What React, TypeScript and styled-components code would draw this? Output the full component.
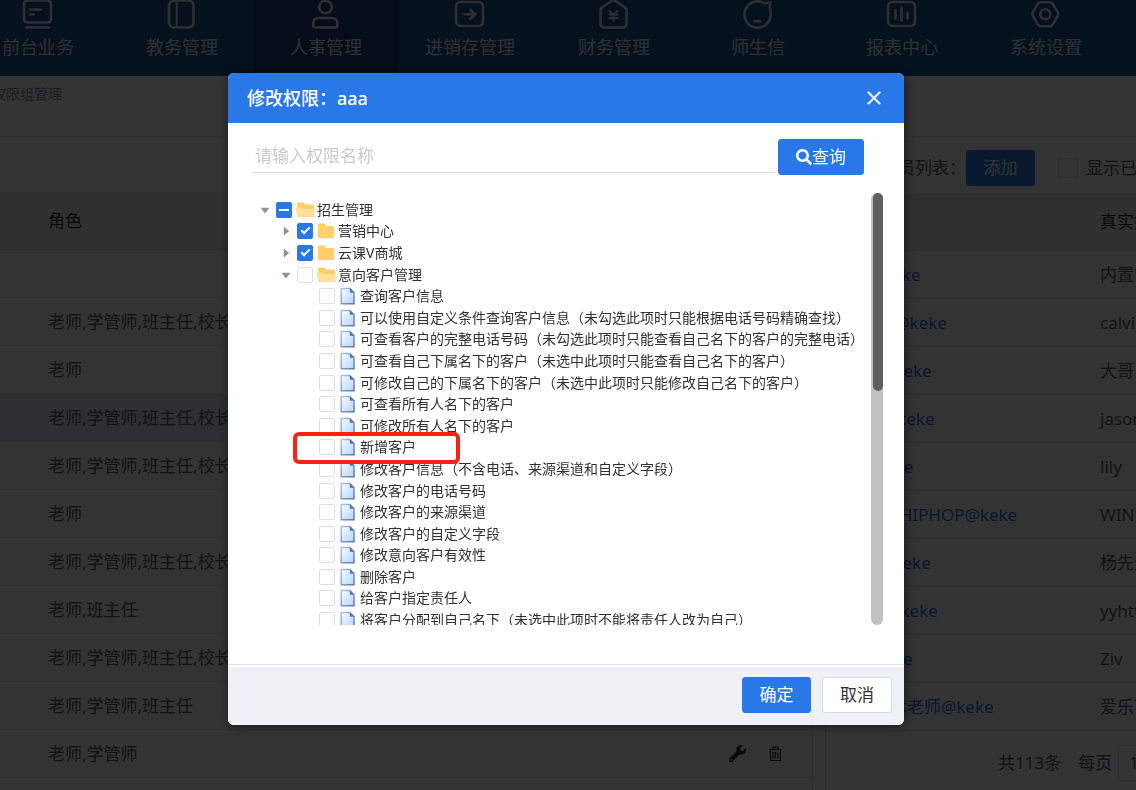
import React, { useEffect, useRef } from "react";
import styled, { createGlobalStyle, css } from "styled-components";
import { FaSearch, FaWrench } from "react-icons/fa";

const PRIMARY = "#2878e8";
const FONT = '"Noto Sans", "Noto Sans CJK SC", sans-serif';

const GlobalStyle = createGlobalStyle`
  *, *::before, *::after { box-sizing: border-box; }
  html, body { height: 100%; }
  body {
    margin: 0;
    overflow: hidden;
    background: #fff;
    color: #606266;
    font-family: ${FONT};
    font-size: 17px;
    line-height: 24px;
  }
  button, input { font: inherit; }
  a { color: inherit; text-decoration: none; }
`;

/* ---------- page behind the dialog ---------- */

const TopNav = styled.nav`
  height: 76px;
  overflow: hidden;
  background: #1e559f;
`;

const NavList = styled.ul`
  display: flex;
  margin: 0 0 0 -34px;
  padding: 0;
  list-style: none;
`;

const NavLink = styled.a<{ $active?: boolean }>`
  display: flex;
  flex-direction: column;
  align-items: center;
  gap: 5px;
  width: 144px;
  height: 76px;
  color: #e8e8e8;
  font-size: 18px;
  background: ${(p) => (p.$active ? "#1b4378" : "transparent")};
`;

const NavIcon = styled.svg`
  width: 34px;
  height: 30px;
  fill: none;
  stroke: currentColor;
  stroke-width: 2.6;
  stroke-linecap: round;
  stroke-linejoin: round;
`;

const Breadcrumb = styled.div`
  height: 61px;
  padding: 6px 0 0;
  margin-left: -8px;
  border-bottom: 1px solid #e4e6ea;
  color: #909399;
  font-size: 14px;
`;

const Columns = styled.main`
  display: grid;
  grid-template-columns: minmax(0, 1fr) 311px;
  gap: 12px;
`;

const Panel = styled.section<{ $side: "left" | "right" }>`
  min-width: 0;
  overflow: hidden;
  border: 0 solid #dcdfe6;
  ${(p) => (p.$side === "left" ? "border-right-width: 1px;" : "border-left-width: 1px;")}
`;

const Toolbar = styled.div<{ $height: number }>`
  display: flex;
  align-items: center;
  height: ${(p) => p.$height}px;
  padding: 6px 0 0 21px;
  white-space: nowrap;
`;

const Table = styled.table`
  width: 100%;
  border-collapse: separate;
  border-spacing: 0;
  table-layout: fixed;
  white-space: nowrap;
`;

const HeadCell = styled.th<{ $width?: string; $pad?: number }>`
  width: ${(p) => p.$width ?? "auto"};
  height: 58px;
  padding: 0 0 0 ${(p) => p.$pad ?? 0}px;
  border-bottom: 1px solid #e4e6ea;
  background: #f1f1f1;
  color: #303133;
  font-weight: 400;
  text-align: left;
`;

const Row = styled.tr<{ $current?: boolean }>`
  background: ${(p) => (p.$current ? "#d9eefa" : "transparent")};
`;

const Cell = styled.td<{ $pad?: number }>`
  height: 48px;
  padding: 0 0 0 ${(p) => p.$pad ?? 0}px;
  border-bottom: 1px solid #e4e6ea;
`;

const RowActions = styled.div`
  display: flex;
  align-items: center;
  gap: 22px;
`;

const IconButton = styled.button`
  display: flex;
  padding: 0;
  border: 0;
  background: none;
  color: #303133;
`;

const AccountLink = styled.a`
  color: ${PRIMARY};
`;

const ShowLabel = styled.label`
  display: flex;
  align-items: center;
  gap: 8px;
  margin-left: 23px;
`;

const Pager = styled.div`
  display: flex;
  align-items: center;
  gap: 6px;
  height: 64px;
  padding-left: 172px;
  white-space: nowrap;
`;

const PageSize = styled.select`
  width: 90px;
  height: 36px;
  padding: 0 10px;
  border: 1px solid #dcdfe6;
  border-radius: 4px;
  appearance: none;
  background: #fff;
  color: #606266;
  font: inherit;
`;

const Total = styled.span`
  margin-right: 11px;
`;

/* ---------- shared controls ---------- */

const Button = styled.button<{ $primary?: boolean; $width?: number }>`
  display: flex;
  flex: none;
  align-items: center;
  justify-content: center;
  width: ${(p) => p.$width ?? 69}px;
  height: 36px;
  padding: 0;
  border: 1px solid ${(p) => (p.$primary ? PRIMARY : "#d8dce6")};
  border-radius: 3px;
  background: ${(p) => (p.$primary ? PRIMARY : "#fff")};
  color: ${(p) => (p.$primary ? "#fff" : "#303133")};
`;

const checkedMark = css`
  &::before {
    content: "";
    width: 9px;
    height: 5px;
    margin-bottom: 3px;
    border: solid #fff;
    border-width: 0 0 2px 2px;
    transform: rotate(-45deg);
  }
`;

const partialMark = css`
  &::before {
    content: "";
    width: 10px;
    height: 2px;
    background: #fff;
  }
`;

const Checkbox = styled.input<{ $size?: number }>`
  appearance: none;
  display: flex;
  flex: none;
  align-items: center;
  justify-content: center;
  width: ${(p) => p.$size ?? 16}px;
  height: ${(p) => p.$size ?? 16}px;
  margin: 0;
  border: 1px solid #dcdfe8;
  border-radius: 2px;
  background: #fff;
  &:checked,
  &:indeterminate {
    border-color: ${PRIMARY};
    background: ${PRIMARY};
  }
  &:checked { ${checkedMark} }
  &:indeterminate { ${partialMark} }
`;

/* ---------- dialog ---------- */

const Overlay = styled.div`
  position: fixed;
  inset: 0;
  display: flex;
  align-items: flex-start;
  justify-content: center;
  padding: 73px 4px 0 0;
  background: rgba(0, 0, 0, 0.8);
`;

const Dialog = styled.div`
  display: flex;
  flex-direction: column;
  width: 100%;
  max-width: 676px;
  border-radius: 6px;
  overflow: hidden;
  background: #fff;
  color: #303133;
  box-shadow: 1px 1px 12px rgba(0, 0, 0, 0.5);
`;

const DialogHeader = styled.header`
  display: flex;
  align-items: center;
  justify-content: space-between;
  height: 50px;
  padding: 0 22px 0 19px;
  background: ${PRIMARY};
  color: #fff;
`;

const DialogTitle = styled.h2`
  margin: 0;
  font-size: 18px;
  font-weight: 500;
`;

const CloseButton = styled.button`
  display: flex;
  padding: 0;
  border: 0;
  background: none;
  color: #dfeafc;
`;

const DialogBody = styled.div`
  padding: 16px 21px 39px 24px;
`;

const SearchRow = styled.form`
  display: flex;
  align-items: flex-start;
  gap: 4px;
  padding-right: 19px;
`;

const SearchInput = styled.input`
  flex: 1;
  min-width: 0;
  height: 34px;
  padding: 0 3px;
  border: 0;
  border-bottom: 1px solid #dcdfe8;
  outline: 0;
  &::placeholder { color: #c8cad0; }
`;

const TreeScroll = styled.div`
  display: flex;
  height: 432px;
  margin-top: 18px;
`;

const TreeViewport = styled.div`
  flex: 1;
  min-width: 0;
  padding-top: 6px;
  overflow: hidden;
`;

const Tree = styled.ul`
  display: grid;
  grid-auto-rows: 5%;
  height: 432px;
  margin: 0;
  padding: 0 0 0 5px;
  list-style: none;
  font-size: 14px;
`;

const INDENT = [0, 21, 43];

const TreeRow = styled.li<{ $level: number }>`
  position: relative;
  display: flex;
  align-items: center;
  padding-left: ${(p) => INDENT[p.$level]}px;
  white-space: nowrap;
`;

const Toggle = styled.button`
  display: flex;
  align-items: center;
  justify-content: center;
  width: 16px;
  height: 16px;
  margin-right: 3px;
  padding: 0;
  border: 0;
  background: none;
`;

const ToggleSpace = styled.span`
  width: 19px;
`;

const NodeLabel = styled.label`
  display: flex;
  align-items: center;
`;

const NodeIcon = styled.span`
  display: flex;
  justify-content: center;
  width: 20px;
  margin: 0 2px 0 3px;
`;

const Highlight = styled.span`
  position: absolute;
  z-index: 1;
  top: -5px;
  left: 36px;
  width: 167px;
  height: 32px;
  border: 4px solid #fd2113;
  border-radius: 6px;
  pointer-events: none;
`;

const ScrollTrack = styled.div`
  width: 12px;
  padding-left: 2px;
  border-radius: 6px;
  background: #c1c1c1;
`;

const ScrollThumb = styled.div`
  height: 198px;
  border-radius: 5px;
  background: #606060;
`;

const DialogFooter = styled.footer`
  display: flex;
  justify-content: flex-end;
  gap: 11px;
  padding: 10px 12px 12px;
  border-top: 2px solid #fff;
  background: #eff1f6;
`;

const FooterRule = styled.div`
  height: 1px;
  background: #e0e3ee;
`;

/* ---------- drawings ---------- */

const navItems: { label: string; active?: boolean; icon: React.ReactNode }[] = [
  {
    label: "前台业务",
    icon: (
      <>
        <rect x="3" y="0.5" width="27" height="22" rx="3.5" />
        <path d="M9 9.500h11M9 14.500h3.500M5.500 27.500h22.500" />
      </>
    ),
  },
  {
    label: "教务管理",
    icon: (
      <>
        <rect x="4" y="0.5" width="24.500" height="27" rx="5" />
        <path d="M11.700 1v26" strokeWidth="2" />
      </>
    ),
  },
  {
    label: "人事管理",
    active: true,
    icon: (
      <>
        <circle cx="16.500" cy="7" r="6.300" />
        <path d="M4.300 25.500v-2.500a5 5 0 0 1 5-5h14a5 5 0 0 1 5 5v2.500a2 2 0 0 1-2 2h-20a2 2 0 0 1-2-2z" />
      </>
    ),
  },
  {
    label: "进销存管理",
    icon: (
      <>
        <rect x="3" y="2" width="27" height="24" rx="4.500" />
        <path d="M11.500 14.300h10.500M17.500 10l5 4.300-5 4.300" />
      </>
    ),
  },
  {
    label: "财务管理",
    icon: (
      <>
        <path d="M14.500 1.200a3.500 3.500 0 0 1 4 0l9 5.800a4 4 0 0 1 2 3.300v13.500a3.800 3.800 0 0 1-3.800 3.800h-18.400a3.800 3.800 0 0 1-3.800-3.800v-13.500a4 4 0 0 1 2-3.300z" />
        <path d="M12.800 11l3.700 4 3.700-4M16.500 15v5.500M12.300 14.700h8.400M12.300 18h8.400" strokeWidth="2" />
      </>
    ),
  },
  {
    label: "师生信",
    icon: (
      <>
        <path d="M22.500 2.700A13.200 13.200 0 1 0 29.300 11c-.6-2.500-.8-5 .2-8.700-2.500 1-4.500 1.200-7 .4z" />
        <path d="M13.500 21.300h6" />
      </>
    ),
  },
  {
    label: "报表中心",
    icon: (
      <>
        <rect x="3" y="2" width="27" height="24" rx="4.500" />
        <path d="M10.500 10v8.500M16.500 8v12.500M22.500 12.500v6" />
      </>
    ),
  },
  {
    label: "系统设置",
    icon: (
      <>
        <path d="M11.500 2.200h9.500a3 3 0 0 1 2.600 1.500l5.200 9a3 3 0 0 1 0 3l-5.200 9a3 3 0 0 1-2.600 1.500h-9.500a3 3 0 0 1-2.600-1.500l-5.200-9a3 3 0 0 1 0-3l5.200-9a3 3 0 0 1 2.600-1.500z" />
        <circle cx="16.300" cy="14.200" r="5" />
      </>
    ),
  },
];

const TrashIcon = () => (
  <svg width="15" height="16" viewBox="0 0 15 16" fill="none" stroke="currentColor" strokeWidth="1.200">
    <path d="M1 3.500h13M5 3.200V1.200h5v2M2.600 3.500v11h9.800v-11M5.200 6v6.500M7.500 6v6.500M9.800 6v6.500" />
  </svg>
);

const CloseIcon = () => (
  <svg width="16" height="16" viewBox="0 0 16 16" stroke="currentColor" strokeWidth="2.400" strokeLinecap="round">
    <path d="M2.500 2.500l11 11M13.500 2.500l-11 11" />
  </svg>
);

const Caret = ({ open }: { open: boolean }) => (
  <svg width="10" height="10" viewBox="0 0 10 10" fill="#8f9299">
    <path d={open ? "M.5 2.800h9L5 8.500z" : "M2.800.5v9L8.200 5z"} />
  </svg>
);

const FolderIcon = ({ open }: { open: boolean }) =>
  open ? (
    <svg width="20" height="16" viewBox="0 0 20 16">
      <path d="M2 2A1.500 1.500 0 0 1 3.500.5h4.800l2 2h7.200A1.500 1.500 0 0 1 19 4v10H3z" fill="#ffce66" />
      <path d="M1.300 5.500h4.200l1.500 1.500H19.500V14a1.200 1.200 0 0 1-1.200 1.200H3.500A1.200 1.200 0 0 1 2.300 14L.3 6.500z" fill="#ffe09b" />
    </svg>
  ) : (
    <svg width="18" height="16" viewBox="0 0 18 16">
      <path d="M.8 2A1.500 1.500 0 0 1 2.300.5h5l2.200 2.500h6.200a1.500 1.500 0 0 1 1.500 1.500v9.300a1.500 1.500 0 0 1-1.500 1.500H2.300a1.500 1.500 0 0 1-1.500-1.500z" fill="#ffd06a" />
    </svg>
  );

const FileIcon = () => (
  <svg width="16" height="18" viewBox="0 0 16 18">
    <defs>
      <linearGradient id="sheet" x1="0" y1="0" x2="1" y2="1">
        <stop offset="0" stopColor="#ffffff" />
        <stop offset="0.250" stopColor="#e6f2ff" />
        <stop offset="1" stopColor="#b4d4fb" />
      </linearGradient>
      <linearGradient id="edge" x1="0" y1="0" x2="1" y2="1">
        <stop offset="0" stopColor="#a9c6ee" />
        <stop offset="1" stopColor="#6075ae" />
      </linearGradient>
    </defs>
    <path d="M1.200 1.500h8.800l4 4v11.300H1.200z" fill="url(#sheet)" stroke="url(#edge)" strokeWidth="1.500" />
    <path d="M9.800 1.300v4.500h4.500z" fill="#4e74b8" />
  </svg>
);

/* ---------- data ---------- */

const FULL = "老师,学管师,班主任,校长";
const roleRows = ["", FULL, "老师", FULL, FULL, "老师", FULL, "老师,班主任", FULL, "老师,学管师,班主任", "老师,学管师"];

const members: [string, string][] = [
  ["neil@keke", "内置管理员"],
  ["calvin1@keke", "calvin"],
  ["dage@keke", "大哥"],
  ["jason@keke", "jason"],
  ["lily@keke", "lily"],
  ["WINNI_HIPHOP@keke", "WINNI"],
  ["yang@keke", "杨先生"],
  ["yyhttt@keke", "yyhttt"],
  ["ziv@keke", "Ziv"],
  ["爱乐艺术老师@keke", "爱乐艺术"],
];

type TreeNode = {
  text: string;
  level: number;
  open?: boolean;
  state?: "checked" | "partial";
  marked?: boolean;
};

const leaf = (text: string, marked = false): TreeNode => ({ text, level: 2, marked });

const nodes: TreeNode[] = [
  { text: "招生管理", level: 0, open: true, state: "partial" },
  { text: "营销中心", level: 1, open: false, state: "checked" },
  { text: "云课V商城", level: 1, open: false, state: "checked" },
  { text: "意向客户管理", level: 1, open: true },
  leaf("查询客户信息"),
  leaf("可以使用自定义条件查询客户信息（未勾选此项时只能根据电话号码精确查找）"),
  leaf("可查看客户的完整电话号码（未勾选此项时只能查看自己名下的客户的完整电话）"),
  leaf("可查看自己下属名下的客户（未选中此项时只能查看自己名下的客户）"),
  leaf("可修改自己的下属名下的客户（未选中此项时只能修改自己名下的客户）"),
  leaf("可查看所有人名下的客户"),
  leaf("可修改所有人名下的客户"),
  leaf("新增客户", true),
  leaf("修改客户信息（不含电话、来源渠道和自定义字段）"),
  leaf("修改客户的电话号码"),
  leaf("修改客户的来源渠道"),
  leaf("修改客户的自定义字段"),
  leaf("修改意向客户有效性"),
  leaf("删除客户"),
  leaf("给客户指定责任人"),
  leaf("将客户分配到自己名下（未选中此项时不能将责任人改为自己）"),
];

/* ---------- components ---------- */

function TreeItem({ node }: { node: TreeNode }) {
  const box = useRef<HTMLInputElement>(null);
  useEffect(() => {
    if (box.current) box.current.indeterminate = node.state === "partial";
  }, [node.state]);
  const isFolder = node.open !== undefined;
  return (
    <TreeRow $level={node.level}>
      {isFolder ? (
        <Toggle type="button" aria-label={node.open ? "收起" : "展开"}>
          <Caret open={!!node.open} />
        </Toggle>
      ) : (
        <ToggleSpace />
      )}
      <NodeLabel>
        <Checkbox ref={box} type="checkbox" defaultChecked={node.state === "checked"} />
        <NodeIcon>{isFolder ? <FolderIcon open={!!node.open} /> : <FileIcon />}</NodeIcon>
        {node.text}
      </NodeLabel>
      {node.marked && <Highlight />}
    </TreeRow>
  );
}

export default function App() {
  return (
    <>
      <GlobalStyle />
      <TopNav>
        <NavList>
          {navItems.map((item) => (
            <li key={item.label}>
              <NavLink href="#" $active={item.active}>
                <NavIcon viewBox="0 0 34 30">{item.icon}</NavIcon>
                {item.label}
              </NavLink>
            </li>
          ))}
        </NavList>
      </TopNav>
      <Breadcrumb>权限组管理</Breadcrumb>
      <Columns>
        <Panel $side="left">
          <Toolbar $height={55} />
          <Table>
            <thead>
              <tr>
                <HeadCell $pad={48}>角色</HeadCell>
                <HeadCell $width="83px" />
              </tr>
            </thead>
            <tbody>
              {roleRows.map((roles, i) => (
                <Row key={i} $current={i === 3}>
                  <Cell $pad={48}>{roles}</Cell>
                  <Cell>
                    <RowActions>
                      <IconButton type="button" aria-label="修改">
                        <FaWrench size={17} />
                      </IconButton>
                      <IconButton type="button" aria-label="删除">
                        <TrashIcon />
                      </IconButton>
                    </RowActions>
                  </Cell>
                </Row>
              ))}
            </tbody>
          </Table>
        </Panel>
        <Panel $side="right">
          <Toolbar $height={56}>
            组内成员列表：
            <Button type="button" $primary>
              添加
            </Button>
            <ShowLabel>
              <Checkbox type="checkbox" $size={20} />
              显示已离职
            </ShowLabel>
          </Toolbar>
          <Table>
            <thead>
              <tr>
                <HeadCell $width="274px" $pad={13}>
                  账号
                </HeadCell>
                <HeadCell>真实姓名</HeadCell>
              </tr>
            </thead>
            <tbody>
              {members.map(([account, name]) => (
                <Row key={account}>
                  <Cell $pad={13}>
                    <AccountLink href="#">{account}</AccountLink>
                  </Cell>
                  <Cell>{name}</Cell>
                </Row>
              ))}
            </tbody>
          </Table>
          <Pager>
            <Total>共113条</Total>
            每页
            <PageSize aria-label="每页条数" defaultValue="10">
              <option value="10">10</option>
              <option value="20">20</option>
            </PageSize>
          </Pager>
        </Panel>
      </Columns>

      <Overlay>
        <Dialog role="dialog" aria-modal="true" aria-labelledby="dialog-title">
          <DialogHeader>
            <DialogTitle id="dialog-title">修改权限：aaa</DialogTitle>
            <CloseButton type="button" aria-label="关闭">
              <CloseIcon />
            </CloseButton>
          </DialogHeader>
          <DialogBody>
            <SearchRow onSubmit={(e) => e.preventDefault()}>
              <SearchInput type="text" aria-label="权限名称" placeholder="请输入权限名称" />
              <Button type="submit" $primary $width={86}>
                <FaSearch size={16} />
                查询
              </Button>
            </SearchRow>
            <TreeScroll>
              <TreeViewport>
                <Tree>
                  {nodes.map((node) => (
                    <TreeItem key={node.text} node={node} />
                  ))}
                </Tree>
              </TreeViewport>
              <ScrollTrack>
                <ScrollThumb />
              </ScrollTrack>
            </TreeScroll>
          </DialogBody>
          <FooterRule />
          <DialogFooter>
            <Button type="button" $primary>
              确定
            </Button>
            <Button type="button" $width={70}>
              取消
            </Button>
          </DialogFooter>
        </Dialog>
      </Overlay>
    </>
  );
}
